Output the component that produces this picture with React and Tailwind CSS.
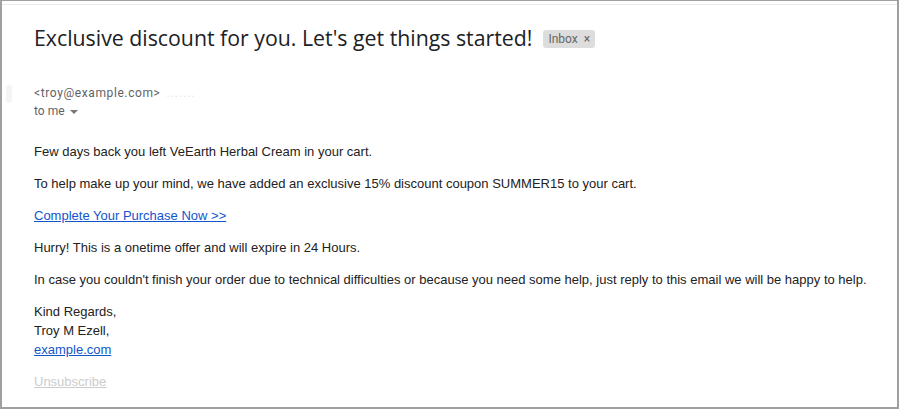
export default function App() {
  return (
    <div className="w-[899px] h-[409px] bg-white border-l-2 border-r-2 border-b-2 border-t border-[#a39f9f] relative overflow-hidden">
      <div className="h-[3px]" />
      <div className="h-px bg-[#ececec]" />
      <div className="absolute left-[4px] top-[84px] w-[6px] h-[18px] rounded-full bg-[#f4f4f4]" />
      <div className="pl-[32px] pt-[19px]">
        <div className="flex items-center">
          <h1 className="text-[21.3px] leading-[28px] text-[#202124]" style={{ fontFamily: '"Open Sans", sans-serif' }}>
            Exclusive discount for you. Let's get things started!
          </h1>
          <span className="ml-[11px] mt-[2px] flex items-center h-[18px] px-[5px] rounded-[3px] bg-[#dddddd] text-[12px] text-[#666666]" style={{ fontFamily: 'Roboto, Arial, sans-serif' }}>
            Inbox<span className="ml-[6px] text-[12px] leading-none">×</span>
          </span>
        </div>
        <div className="mt-[33px] flex items-center text-[12px] leading-[17px] text-[#5f6368] tracking-[0.6px]" style={{ fontFamily: 'Roboto, Arial, sans-serif' }}>
          <span>&lt;troy@example.com&gt;</span>
          <span className="ml-[6px] text-[#e6e6e6] tracking-[1px]">.......</span>
        </div>
        <div className="flex items-center text-[12px] leading-[18px] text-[#5f6368]" style={{ fontFamily: 'Roboto, Arial, sans-serif' }}>
          to me
          <svg className="ml-[5px] mt-[1px]" width="8" height="4" viewBox="0 0 8 4"><path d="M0 0 L8 0 L4 4 Z" fill="#777" /></svg>
        </div>
        <div className="mt-[22px] text-[13px] leading-[19px] text-[#222222]" style={{ fontFamily: '"Liberation Sans", Arial, sans-serif' }}>
          <p>Few days back you left VeEarth Herbal Cream in your cart.</p>
          <p className="mt-[13px]">To help make up your mind, we have added an exclusive 15% discount coupon SUMMER15 to your cart.</p>
          <p className="mt-[13px]"><a className="text-[#1155cc] underline">Complete Your Purchase Now &gt;&gt;</a></p>
          <p className="mt-[13px]">Hurry! This is a onetime offer and will expire in 24 Hours.</p>
          <p className="mt-[13px]">In case you couldn't finish your order due to technical difficulties or because you need some help, just reply to this email we will be happy to help.</p>
          <p className="mt-[13px]">Kind Regards,<br />Troy M Ezell,<br /><a className="text-[#1155cc] underline">example.com</a></p>
          <p className="mt-[13px]"><a className="text-[#cccccc] underline">Unsubscribe</a></p>
        </div>
      </div>
    </div>
  );
}
